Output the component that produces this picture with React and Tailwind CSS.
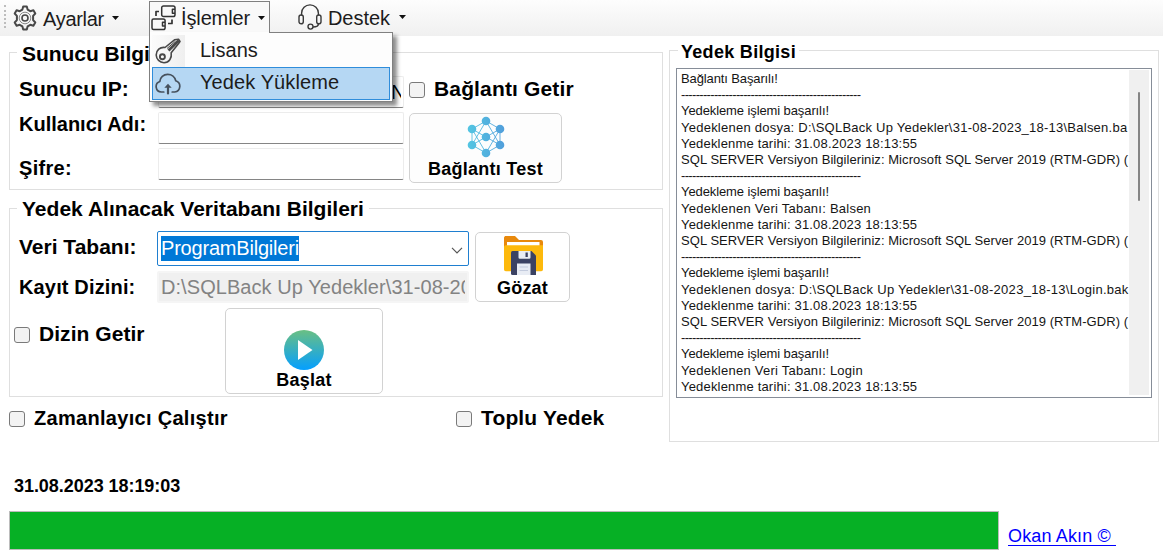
import React from "react";

const ARIAL = "font-['Liberation_Sans',Arial,sans-serif]";

function Caret({ className = "" }) {
  return (
    <svg className={`h-[4px] w-[7px] shrink-0 ${className}`} viewBox="0 0 7 4">
      <path d="M0 0h7L3.5 4z" fill="#111" />
    </svg>
  );
}

function GearIcon() {
  return (
    <svg className="h-[26px] w-6 shrink-0" viewBox="0 0 24 26" fill="none" stroke="#484848" strokeWidth="2" strokeLinejoin="round">
      <path d="M9.4 4.6 10.2 1.6h3.6l.8 3 2.7 1.6 3.1-.9 1.9 3.2-2.2 2.4v4.2l2.2 2.4-1.9 3.2-3.1-.9-2.7 1.6-.8 3h-3.6l-.8-3-2.7-1.6-3.1.9-1.9-3.2 2.2-2.4v-4.2L1.7 8.500l1.9-3.200 3.100.900z" />
      <circle cx="12" cy="13" r="5.800" strokeWidth="1" stroke="#8a8a8a" />
      <circle cx="12" cy="13" r="3" strokeWidth="1.600" />
    </svg>
  );
}

function ProcessIcon() {
  return (
    <svg className="h-[26px] w-[26px] shrink-0" viewBox="0 0 26 26" fill="none" stroke="#333" strokeWidth="1.500" strokeLinejoin="round">
      <path d="M12.500 1h9.700A1.800 1.800 0 0 1 24 2.800v6.900a1.800 1.800 0 0 1-1.800 1.800h-9.700a1.800 1.800 0 0 1-1.800-1.800V2.800A1.800 1.800 0 0 1 12.500 1z" />
      <path d="M24 4.300h-2.600v4H24" />
      <path d="M2.500 14h9.800a1.800 1.800 0 0 1 1.800 1.800v7a1.800 1.800 0 0 1-1.800 1.800H2.500A1.500 1.500 0 0 1 1 23.100v-7.600A1.500 1.500 0 0 1 2.500 14zM14.100 17.300h-2.600v3.800h2.600" />
      <path d="M5 11V6.500h3M21 14.500v4h-4" strokeWidth="1.700" />
    </svg>
  );
}

function HeadsetIcon() {
  return (
    <svg className="h-[26px] w-6 shrink-0" viewBox="0 0 24 26" fill="none" stroke="#3a3a3a" strokeWidth="1.400">
      <path d="M3.600 11.500V9.200A8.400 8.300 0 0 1 20.400 9.200v2.300" />
      <rect x="1" y="11" width="4.300" height="8.800" rx="2.100" />
      <rect x="18.700" y="11" width="4.300" height="8.800" rx="2.100" />
      <path d="M20.500 19.800c0 2-2.200 3.200-5.500 3.200" />
      <circle cx="12.500" cy="22.600" r="2.500" />
    </svg>
  );
}

function KeyIcon() {
  return (
    <svg className="h-[26px] w-[26px] shrink-0" viewBox="0 0 26 26" fill="none" stroke="#484848" strokeWidth="1.600" strokeLinejoin="round">
      <path d="M10 9.500 19.500 1.800 23.500 1.300 25 3.500 23.200 6 16.200 14.800c.9 5.400-2.200 9.700-7.200 9.900A7.900 7.900 0 0 1 1.200 17c0-4.700 3.800-8.200 8.800-7.500z" />
      <circle cx="7.400" cy="18.700" r="2.500" strokeWidth="1.900" />
      <path d="M13.500 12.500 23.800 2.500" strokeWidth="2.800" />
      <path d="M12 10.500 20.500 3.200" strokeWidth="1" />
    </svg>
  );
}

function CloudIcon() {
  return (
    <svg className="h-[22px] w-[26px] shrink-0" viewBox="0 0 26 22" fill="none" stroke="#46515d" strokeWidth="1.700" strokeLinecap="round">
      <path d="M8.800 19H6.300a5.400 5.400 0 0 1-1.500-10.500C5.100 4.400 8.500 1.300 12.700 1.300c4 0 7.300 2.700 8 6.400a5.800 5.800 0 0 1-1 11.300h-2.500" />
      <path d="M13 20.500v-7.500" strokeWidth="2.200" />
      <path d="M9.300 14.800 13 10.800l3.700 4z" fill="#46515d" stroke="none" />
    </svg>
  );
}

function NetworkIcon() {
  return (
    <svg className="h-[42px] w-[38px] shrink-0" viewBox="0 0 38 42">
      <defs>
        <linearGradient id="net" gradientUnits="userSpaceOnUse" x1="1" y1="0" x2="37" y2="0">
          <stop offset="0" stopColor="#53c5e2" />
          <stop offset="1" stopColor="#519fdb" />
        </linearGradient>
      </defs>
      <path
        d="M19 5 5 13v16l14 8 14-8V13zM5 13l14 8 14-8M5 29l14-8 14 8M19 5 5 29M19 5l14 24M19 37 5 13M19 37l14-24"
        fill="none" stroke="url(#net)" strokeWidth="0.900"
      />
      <g fill="url(#net)">
        <circle cx="19" cy="5" r="4.300" />
        <circle cx="5" cy="13" r="4.300" />
        <circle cx="33" cy="13" r="4.300" />
        <circle cx="19" cy="21" r="4.300" />
        <circle cx="5" cy="29" r="4.300" />
        <circle cx="33" cy="29" r="4.300" />
        <circle cx="19" cy="37" r="4.300" />
      </g>
    </svg>
  );
}

function FolderSaveIcon() {
  return (
    <svg className="h-10 w-10 shrink-0" viewBox="0 0 40 40">
      <path d="M2 0h10l4 4h22a2 2 0 0 1 2 2v20H1V1.500z" fill="#e8890c" />
      <path d="M4 6h32.500v8H4z" fill="#fff" />
      <path d="M1 11a1.800 1.800 0 0 1 1.800-1.800H40V33.500a1.800 1.800 0 0 1-1.800 1.800H2.800A1.800 1.800 0 0 1 1 33.500z" fill="#fdb90c" />
      <path d="M8 16.500A1.500 1.500 0 0 1 9.500 15h19L33 19.500V39H9.500A1.500 1.500 0 0 1 8 37.500z" fill="#3b4263" />
      <path d="M15.500 15h12v6.500a1.300 1.300 0 0 1-1.300 1.300h-9.400a1.300 1.300 0 0 1-1.300-1.300z" fill="#e8ecf4" />
      <path d="M22.500 16.500h2.300v4.500h-2.300z" fill="#3b4263" />
      <path d="M14 27.500h13.500V39H14z" fill="#e8ecf4" />
      <path d="M16.500 31h8.500M16.500 34.500h8.500" stroke="#c3cbdd" strokeWidth="1" />
    </svg>
  );
}

function PlayIcon() {
  return (
    <svg className="h-10 w-10 shrink-0" viewBox="0 0 40 40">
      <defs>
        <linearGradient id="play" x1="0" y1="0" x2="0" y2="1">
          <stop offset="0" stopColor="#6abf83" />
          <stop offset="1" stopColor="#049fff" />
        </linearGradient>
      </defs>
      <circle cx="20" cy="20" r="20" fill="url(#play)" />
      <path d="M14 10v20l14.500-10z" fill="#fff" />
    </svg>
  );
}

function Check({ children, className = "" }) {
  return (
    <label className={`flex h-6 items-center whitespace-nowrap font-bold leading-6 ${className}`}>
      <span className="mt-px mr-[9px] h-4 w-4 shrink-0 rounded-[3px] border border-[#7a7a7a] bg-[#f3f3f3]" />
      {children}
    </label>
  );
}

function Group({ title, titleClass, className, children }) {
  return (
    <section className={`relative shrink-0 border-[1.500px] border-[#dfdfdf] ${className}`}>
      <h2 className={`absolute whitespace-nowrap bg-white font-bold ${titleClass}`}>{title}</h2>
      {children}
    </section>
  );
}

function Field({ className = "" }) {
  return <div className={`h-8 w-[246px] rounded-[2px] border border-[#ececec] border-b-[#858585] bg-white ${className}`} />;
}

const rule = { text: "-".repeat(49), cls: "tracking-[-0.670px]" };
const ok = { text: "Yedekleme işlemi başarılı!", cls: "tracking-[-0.100px]" };
const date = { text: "Yedeklenme tarihi: 31.08.2023 18:13:55", cls: "tracking-[0.180px]" };
const version = { text: "SQL SERVER Versiyon Bilgileriniz: Microsoft SQL Server 2019 (RTM-GDR) (", cls: "tracking-[0.060px]" };
const LOG = [
  { text: "Bağlantı Başarılı!", cls: "tracking-[-0.120px]" },
  rule, ok,
  { text: "Yedeklenen dosya: D:\\SQLBack Up Yedekler\\31-08-2023_18-13\\Balsen.ba", cls: "tracking-[0.240px]" },
  date, version, rule, ok,
  { text: "Yedeklenen Veri Tabanı: Balsen", cls: "tracking-[0.240px]" },
  date, version, rule, ok,
  { text: "Yedeklenen dosya: D:\\SQLBack Up Yedekler\\31-08-2023_18-13\\Login.bak", cls: "tracking-[0.280px]" },
  date, version, rule, ok,
  { text: "Yedeklenen Veri Tabanı: Login", cls: "tracking-[0.240px]" },
  date,
];

function Toolbar() {
  return (
    <nav className="relative z-10 flex h-9 shrink-0 items-start bg-gradient-to-b from-[#fdfdfd] to-[#f0f0f0] text-[20px] leading-6 text-[#1c1c1c]">
      <div className="ml-1 mt-[5px] h-[23px] w-0 border-l-2 border-dotted border-[#bdbdbd]" />
      <button className="ml-[7px] mt-[5px] flex h-[26px] items-center">
        <GearIcon />
        <span className="ml-[6px] w-[61px] pt-px tracking-[-0.300px]">Ayarlar</span>
        <Caret className="ml-[8px]" />
      </button>
      <div className="relative ml-[30px] mt-px h-8 w-[121px] border border-b-0 border-[#808080] bg-[#f9f9f9]">
        <button className="flex h-[31px] items-center pl-px">
          <ProcessIcon />
          <span className="ml-[4px] w-[69px] tracking-[-0.150px]">İşlemler</span>
          <Caret className="ml-[8px]" />
        </button>
        <div className="absolute -left-px top-[30px] h-[70px] w-[244px] border border-[#808080] bg-[#fdfdfd] p-[2px] shadow-[4px_4px_4px_rgba(0,0,0,0.450)]">
          <div className="absolute -top-px left-0 h-px w-[119px] bg-[#fdfdfd]" />
          <div className="flex h-[32px] items-center">
            <div className="flex h-full w-[33px] items-center bg-gradient-to-r from-[#fbfbfb] to-[#efefef] pl-[3px]"><KeyIcon /></div>
            <span className="mb-[3px] ml-[15px]">Lisans</span>
          </div>
          <div className="flex h-[33px] items-center border border-[#2f8ddb] bg-[#b5d7f3] pl-[2px]">
            <CloudIcon />
            <span className="mb-[3px] ml-[19px] tracking-[0.100px]">Yedek Yükleme</span>
          </div>
        </div>
      </div>
      <button className="ml-[28px] mt-[4px] flex h-[26px] items-center">
        <HeadsetIcon />
        <span className="ml-[5px] w-[64px] pt-px">Destek</span>
        <Caret className="ml-[8px]" />
      </button>
    </nav>
  );
}

export default function App() {
  return (
    <div className={`flex h-[551px] w-[1163px] flex-col overflow-hidden bg-white text-black ${ARIAL}`}>
      <Toolbar />
      <div className="flex h-[406px] shrink-0 pl-[9px]">
        <div className="flex w-[654px] shrink-0 flex-col pt-4">
          <Group title="Sunucu Bilgileri" className="h-[138px]" titleClass="-top-[11px] left-[7px] px-[5px] text-[21px] leading-6 tracking-[-0.050px]">
            <div className="flex pl-[9px] pt-[23px]">
              <div className="flex w-[139px] flex-col text-[20px] font-bold leading-6">
                <span className="mt-[1px] text-[21px]">Sunucu IP:</span>
                <span className="mt-[11px]">Kullanıcı Adı:</span>
                <span className="mt-[20px] tracking-[0.300px]">Şifre:</span>
              </div>
              <div className="flex flex-col gap-[4px]">
                <div className="flex h-8 w-[246px] items-center justify-end overflow-hidden rounded-[2px] border border-[#ececec] border-b-[#858585] text-[20px]">
                  <span className="mr-[2px] w-[10px] overflow-hidden">N</span>
                </div>
                <Field />
                <Field />
              </div>
              <div className="ml-[5px] flex flex-col">
                <Check className="mt-[1px] text-[21px] tracking-[0.150px]">Bağlantı Getir</Check>
                <button className="mt-[12px] flex h-[70px] w-[153px] flex-col items-center rounded-[5px] border-[1.500px] border-[#d2d2d2] bg-[#fdfdfd] pt-[2px]">
                  <NetworkIcon />
                  <span className="mt-px text-[18px] font-bold leading-5 tracking-[0.250px]">Bağlantı Test</span>
                </button>
              </div>
            </div>
          </Group>

          <Group title="Yedek Alınacak Veritabanı Bilgileri" className="mt-[18px] h-[189px]" titleClass="-top-[12px] left-[7px] px-[5px] text-[21px] leading-6 tracking-[0.020px]">
            <div className="flex pl-[9px] pt-[22px]">
              <div className="flex w-[138px] flex-col text-[20px] font-bold leading-6">
                <span className="mt-[4px] text-[21px]">Veri Tabanı:</span>
                <span className="mt-[16px] tracking-[0.150px]">Kayıt Dizini:</span>
              </div>
              <div className="flex w-[312px] flex-col text-[20px]">
                <div className="flex h-[35px] items-center justify-between rounded-[2px] border border-[#1f7fd0] pl-[3px] pr-[5px]">
                  <span className="h-[25px] w-[138px] bg-[#0078d7] leading-6 tracking-[-0.200px] text-white">ProgramBilgileri</span>
                  <svg className="mt-1 h-[7px] w-3" viewBox="0 0 12 7" fill="none" stroke="#555" strokeWidth="1.200"><path d="m1 .8 5 5 5-5" /></svg>
                </div>
                <div className="mt-[5px] h-8 overflow-hidden rounded-[2px] border-2 border-[#f5f5f5] bg-[#f0f0f0] pl-[2px] pr-[2px] leading-7 text-[#838383]">
                  <div className="overflow-hidden whitespace-nowrap tracking-[0.060px]">D:\SQLBack Up Yedekler\31-08-20</div>
                </div>
              </div>
              <button className="ml-[6px] mt-px flex h-[70px] w-[95px] flex-col items-center rounded-[5px] border-[1.500px] border-[#d2d2d2] bg-white pt-[3px]">
                <FolderSaveIcon />
                <span className="mt-[2px] text-[18px] font-bold leading-5 tracking-[0.200px]">Gözat</span>
              </button>
            </div>
            <div className="flex items-start pl-1 pt-[5px]">
              <Check className="mt-[14px] w-[211px] text-[21px] tracking-[0.050px]">Dizin Getir</Check>
              <button className="flex h-[86px] w-[158px] flex-col items-center rounded-[5px] border-[1.500px] border-[#d2d2d2] bg-white pt-[21px]">
                <PlayIcon />
                <span className="text-[18px] font-bold leading-5 tracking-[0.250px]">Başlat</span>
              </button>
            </div>
          </Group>

          <div className="mt-[9px] flex">
            <Check className="w-[447px] text-[20px] tracking-[0.300px]">Zamanlayıcı Çalıştır</Check>
            <Check className="text-[21px] tracking-[0.150px]">Toplu Yedek</Check>
          </div>
        </div>

        <Group title="Yedek Bilgisi" className="ml-[6px] mt-[14px] h-[392px] w-[490px] pl-[6px] pt-[17px]" titleClass="-top-[9px] left-[8px] px-[3px] text-[18px] leading-5 tracking-[0.300px]">
          <div className="flex h-[330px] w-[476px] border border-[#868d98] bg-white">
            <div className="min-w-0 flex-1 overflow-hidden pl-[4px] pt-[2px] text-[13px] leading-[16.200px] text-[#151515]">
              {LOG.map((l, i) => (
                <div key={i} className={`whitespace-pre ${l.cls}`}>{l.text}</div>
              ))}
            </div>
            <div className="mb-[2px] mr-[2px] mt-px w-5 shrink-0 bg-[#f0f0f0] pl-[9px] pt-[22px]">
              <div className="h-[109px] w-[2px] rounded-full bg-[#858585]" />
            </div>
          </div>
        </Group>
      </div>

      <div className="shrink-0 pl-[14px] pt-[34px] text-[18px] font-bold leading-5 tracking-[-0.050px]">31.08.2023 18:19:03</div>
      <div className="mt-[15px] flex shrink-0 pl-[9px]">
        <div className="h-[39px] w-[990px] border border-[#bcbcbc] bg-[#06b025]" />
        <a className="ml-[9px] mt-[14px] h-[21px] whitespace-pre border-b border-[#0000ff] text-[18px] leading-[22px] tracking-[0.150px] text-[#0000ff]">{"Okan Akın © "}</a>
      </div>
    </div>
  );
}
